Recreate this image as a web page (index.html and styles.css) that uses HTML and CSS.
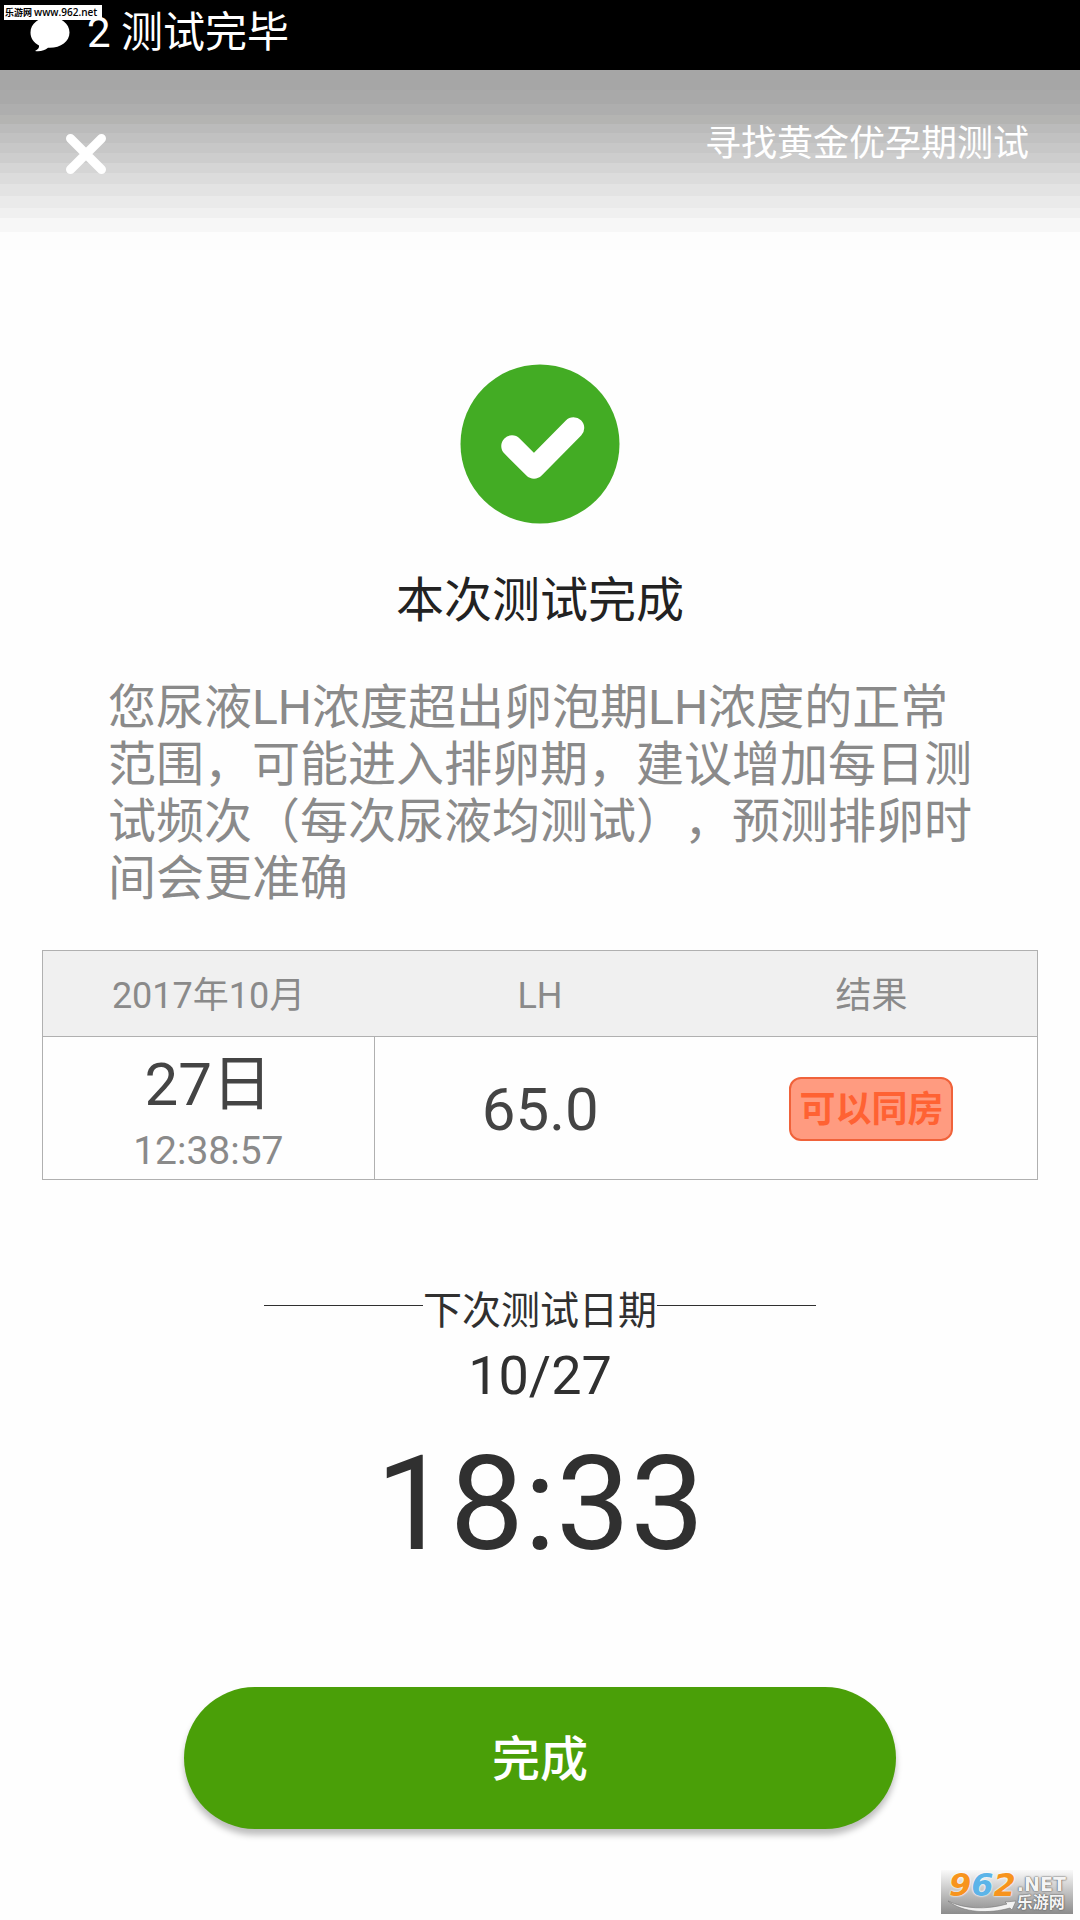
FILE: index.html
```html
<!DOCTYPE html>
<html lang="zh-CN">
<head>
<meta charset="utf-8">
<meta name="viewport" content="width=device-width, initial-scale=1">
<title>本次测试完成</title>
<link rel="stylesheet" href="styles.css">
</head>
<body>
<div class="status">
  <svg class="status-icon" viewBox="0 0 40 36" aria-hidden="true"><path fill="#fff" d="M20 1C9 1 .5 7.500.5 16.500c0 5.500 3 10 8.500 13 .5 2-1 4-4 5.500 5 .8 10-.5 13-3.200 12 .7 21.500-6 21.500-15.300C39.500 7.500 31 1 20 1z"/></svg>
  <span>2 测试完毕</span>
</div>
<header class="topbar">
  <button class="close" type="button" aria-label="关闭">
    <svg viewBox="0 0 40 40" aria-hidden="true"><path d="M4.500 4.500l31 31M35.500 4.500l-31 31" stroke="#fff" stroke-width="9" stroke-linecap="round"/></svg>
  </button>
  <span class="topbar-title">寻找黄金优孕期测试</span>
</header>
<main class="result">
  <svg class="done-icon" viewBox="0 0 160 160" aria-hidden="true">
    <circle cx="80" cy="80" r="79.500" fill="#43ac24"/>
    <path d="M52 82l22 22 39.500-40" fill="none" stroke="#fff" stroke-width="21.500" stroke-linecap="round" stroke-linejoin="round"/>
  </svg>
  <h1 class="done-title">本次测试完成</h1>
  <p class="advice">您尿液LH浓度超出卵泡期LH浓度的正常范围，可能进入排卵期，建议增加每日测试频次（每次尿液均测试），预测排卵时间会更准确</p>
  <table class="record">
    <thead>
      <tr><th scope="col">2017年10月</th><th scope="col">LH</th><th scope="col">结果</th></tr>
    </thead>
    <tbody>
      <tr>
        <td class="when"><span class="day">27日</span><span class="clock">12:38:57</span></td>
        <td class="value">65.0</td>
        <td><span class="badge">可以同房</span></td>
      </tr>
    </tbody>
  </table>
  <h2 class="next-title">下次测试日期</h2>
  <p class="next-date">10/27</p>
  <p class="next-time">18:33</p>
  <button class="finish" type="button">完成</button>
</main>
<div class="tag">乐游网 <span>www.962.net</span></div>
<div class="brand">
  <span class="brand-num"><i class="orange">9</i><i class="blue">6</i><i class="orange">2</i></span>
  <span class="brand-side"><span class="brand-net">.NET</span><span class="brand-name">乐游网</span></span>
  <svg class="brand-swoosh" viewBox="0 0 70 14" aria-hidden="true"><path d="M1 1c16 8 38 9 59 3l-2-2 11-1-4 9-2-2C42 14 16 13 1 1z" fill="#f2f2f2" stroke="#777" stroke-width=".6"/></svg>
</div>
</body>
</html>
```
FILE: styles.css
```css
* { box-sizing: border-box; }

body {
  position: relative;
  min-height: 100vh;
  margin: 0;
  background: #fefefe;
  color: #303030;
  font-family: Roboto, "Noto Sans CJK SC", sans-serif;
}

h1, h2, p { margin: 0; font-weight: 400; }

button {
  border: 0;
  padding: 0;
  background: none;
  font-family: inherit;
  cursor: pointer;
}

.status {
  display: flex;
  align-items: flex-start;
  gap: 17px;
  height: 70px;
  padding: 8px 30px;
  background: #000;
  color: #fff;
  font-size: 42px;
  line-height: 50px;
}

.status-icon { width: 40px; height: 36px; margin-top: 8px; }

.topbar {
  display: flex;
  justify-content: space-between;
  align-items: flex-start;
  height: 180px;
  padding: 53px 51px 0 66px;
  background: linear-gradient(
    #a6a6a6 20px, #a9a9a9 20px 34px, #aeaeae 34px 45px, #b4b4b2 45px 54px,
    #bbb 54px 63px, #c1c1c1 63px 73px, #c7c7c7 73px 83px, #cdcdcd 83px 93px,
    #d5d5d5 93px 103px, #dcdcdc 103px 114px, #e3e3e3 114px 126px,
    #eaeaea 126px 138px, #f0f0f0 138px 148px, #f7f7f7 148px 162px, #fdfdfd 162px);
}

.close { padding-top: 11px; }
.close svg { display: block; width: 40px; height: 40px; }

.topbar-title { color: #fff; font-size: 36px; line-height: 42px; }

.result {
  display: flex;
  flex-direction: column;
  align-items: center;
  padding: 114px 42px 91px;
}

.done-icon { width: 160px; height: 160px; }

.done-title {
  margin-top: 49px;
  color: #222;
  font-size: 48px;
  line-height: 56px;
}

.advice {
  margin: 50px 66px 0;
  color: #8a8a8a;
  font-size: 48px;
  line-height: 57px;
  text-spacing-trim: space-all;
}

.record {
  width: 100%;
  margin-top: 43px;
  border: 1px solid #b0b0b0;
  border-collapse: collapse;
  table-layout: fixed;
  text-align: center;
}

.record th {
  height: 86px;
  padding: 4px 0 0;
  border-bottom: 1px solid #b0b0b0;
  background: #f0f0f0;
  color: #8a8a8a;
  font-size: 36px;
  font-weight: 400;
  line-height: 42px;
  vertical-align: middle;
}

.record td { height: 143px; padding: 2px 0 0; }
.record .when { border-right: 1px solid #b0b0b0; }
.day, .clock { display: block; }
.day, .value { color: #444; font-size: 60px; line-height: 84px; }
.record .value { padding-top: 4px; }
.clock { color: #8a8a8a; font-size: 39px; line-height: 48px; }

.badge {
  display: inline-block;
  padding: 2px 8px 0;
  border: 2px solid #f0623a;
  border-radius: 12px;
  background: #ff9b80;
  color: #ff6233;
  font-size: 36px;
  font-weight: 700;
  line-height: 58px;
}

.next-title {
  display: flex;
  align-items: center;
  width: 552px;
  max-width: 100%;
  margin-top: 107px;
  font-size: 39px;
  line-height: 48px;
}

.next-title::before,
.next-title::after {
  content: "";
  flex: 1;
  height: 1px;
  margin-bottom: 12px;
  background: #303030;
}

.next-date { margin-top: 7px; font-size: 54px; line-height: 68px; }
.next-time { margin-top: 17px; font-size: 132px; line-height: 154px; }

.finish {
  width: 712px;
  max-width: 100%;
  margin-top: 106px;
  padding-top: 4px;
  border-radius: 71px;
  background: #4a9f08;
  box-shadow: 0 6px 6px rgba(0, 0, 0, .25);
  color: #fff;
  font-size: 48px;
  font-weight: 500;
  line-height: 138px;
}

.tag {
  position: absolute;
  top: 5px;
  left: 4px;
  padding: 0 5px 0 1px;
  background: #fff;
  color: #000;
  font: 700 9px/14px "Noto Sans CJK SC", sans-serif;
  white-space: nowrap;
}

.tag span { font: 600 10px/14px "Open Sans", sans-serif; }

.brand {
  position: absolute;
  right: 7px;
  bottom: 6px;
  display: flex;
  gap: 1px;
  width: 132px;
  height: 44px;
  padding: 0 2px 0 8px;
  background: linear-gradient(#fafafa, #8c8c8c);
  color: #f4f4f4;
  font-family: "DejaVu Sans", "Noto Sans CJK SC", sans-serif;
  font-weight: 700;
}

.brand-num {
  font-size: 32px;
  line-height: 30px;
  text-shadow: 0 0 2px #fff, 0 0 2px #fff;
}

.orange { color: #f7941d; }
.blue { color: #5cb4e8; }

.brand-side {
  display: flex;
  flex-direction: column;
  padding-top: 5px;
  text-shadow: 0 0 2px #555, 0 0 1px #555;
}

.brand-net { font-size: 19px; line-height: 19px; }
.brand-name { font-size: 16px; line-height: 17px; }
.brand-swoosh { position: absolute; left: 6px; bottom: 0; width: 70px; height: 14px; }
```
